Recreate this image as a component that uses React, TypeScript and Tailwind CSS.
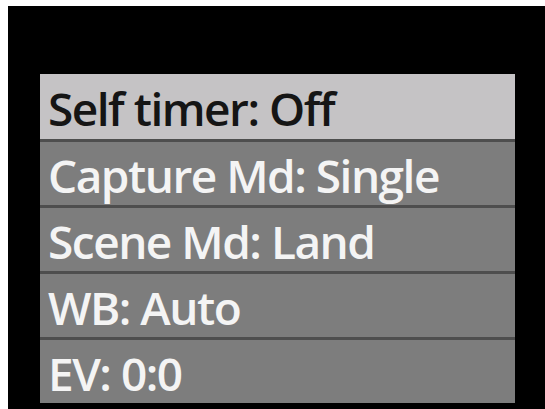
const items = ['Self timer: Off', 'Capture Md: Single', 'Scene Md: Land', 'WB: Auto', 'EV: 0:0'];

export default function App() {
  return (
    <div className="h-[409px] w-[545px] overflow-hidden bg-white pl-[8px] pt-[6px]">
      <div className="h-full w-full bg-black pl-[32px] pr-[30px] pt-[68px]">
        <ul className="flex w-[475px] flex-col gap-[3px] bg-[#4e4e4e]">
          {items.map((item, i) => (
            <li
              key={item}
              className={
                i === 0
                  ? 'flex h-[65px] items-center bg-[#c5c3c5] pl-[8px] pt-[2px] text-[#151515]'
                  : 'flex h-[63px] items-center bg-[#7d7d7d] pl-[8px] pt-[2px] text-[#f4f4f4]'
              }
            >
              <span className="font-['Open_Sans',sans-serif] text-[46px] font-semibold leading-none tracking-[-1.5px]">
                {item}
              </span>
            </li>
          ))}
        </ul>
      </div>
    </div>
  );
}
